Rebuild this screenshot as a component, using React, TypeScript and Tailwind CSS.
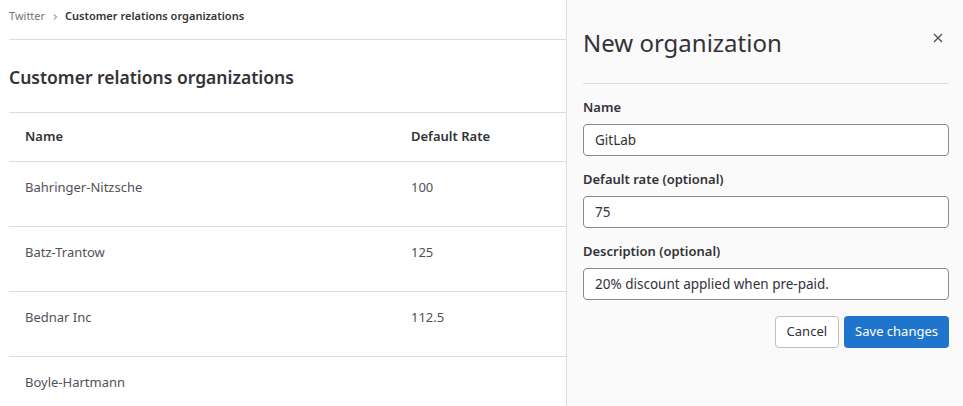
import React from 'react';

interface Org {
  name: string;
  rate: string;
}

const orgs: Org[] = [
  { name: 'Bahringer-Nitzsche', rate: '100' },
  { name: 'Batz-Trantow', rate: '125' },
  { name: 'Bednar Inc', rate: '112.5' },
  { name: 'Boyle-Hartmann', rate: '' },
];

function Field({ label, value }: { label: string; value: string }) {
  return (
    <div className="mb-[13px]">
      <label className="block text-[13px] leading-5 font-semibold text-[#333238] mb-[7px]">{label}</label>
      <input
        readOnly
        value={value}
        className="block w-full h-[32px] px-[11px] text-[13.5px] text-[#333238] bg-white border border-[#89888d] rounded-[4px] outline-none"
      />
    </div>
  );
}

export default function App() {
  return (
    <div
      className="flex w-[963px] h-[406px] overflow-hidden bg-white"
      style={{ fontFamily: '"Noto Sans", "Open Sans", sans-serif' }}
    >
      <div className="flex-1 pl-[9px]">
        <div className="h-[40px] flex items-center pb-[6px] text-[11px] border-b border-[#dcdcde]">
          <span className="text-[#737278]">Twitter</span>
          <svg className="mx-[6px] text-[#a4a3a8]" width="8" height="8" viewBox="0 0 8 8" fill="none">
            <path d="M3 1.5 5.5 4 3 6.5" stroke="currentColor" strokeWidth="1.2" />
          </svg>
          <span className="font-semibold text-[#333238]">Customer relations organizations</span>
        </div>
        <div className="h-[73px] flex items-center pt-[3px] border-b border-[#dcdcde]">
          <h1 className="text-[17.5px] font-semibold text-[#333238]">Customer relations organizations</h1>
        </div>
        <div className="h-[49px] flex items-center border-b border-[#dcdcde] text-[13px] font-semibold text-[#333238]">
          <div className="w-[402px] pl-4">Name</div>
          <div>Default Rate</div>
        </div>
        {orgs.map((o) => (
          <div key={o.name} className="h-[65px] flex pt-[15px] border-b border-[#dcdcde] text-[13px] leading-5 text-[#535158]">
            <div className="w-[402px] pl-4">{o.name}</div>
            <div>{o.rate}</div>
          </div>
        ))}
      </div>

      <div className="w-[397px] shrink-0 bg-[#fafafa] border-l border-[#dcdcde] pl-4 pr-[14px]">
        <div className="relative pt-[27px] pb-[24px] border-b border-[#dcdcde]">
          <h2 className="text-[24px] leading-8 text-[#333238]">New organization</h2>
          <button className="absolute right-[6px] top-[33px] text-[#535158]">
            <svg width="10" height="10" viewBox="0 0 10 10" fill="none">
              <path d="M1 1 9 9M9 1 1 9" stroke="currentColor" strokeWidth="1.4" />
            </svg>
          </button>
        </div>
        <div className="pt-[13px]">
          <Field label="Name" value="GitLab" />
          <Field label="Default rate (optional)" value="75" />
          <Field label="Description (optional)" value="20% discount applied when pre-paid." />
          <div className="flex justify-end gap-[5px] pt-[3px]">
            <button className="h-[32px] px-[11px] text-[13px] text-[#333238] bg-white border border-[#bfbfc3] rounded-[4px]">
              Cancel
            </button>
            <button className="h-[32px] px-[11px] text-[13px] text-white bg-[#1f75cb] rounded-[4px]">
              Save changes
            </button>
          </div>
        </div>
      </div>
    </div>
  );
}
